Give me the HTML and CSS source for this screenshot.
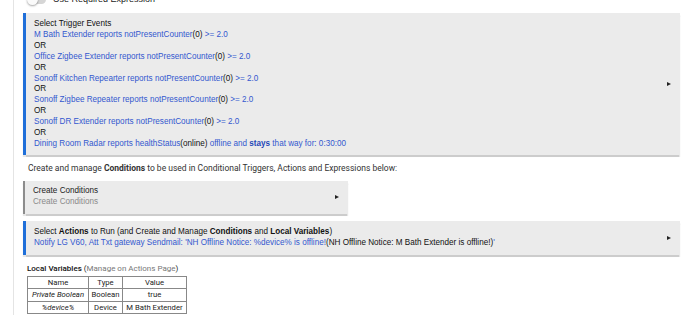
FILE: index.html
```html
<!DOCTYPE html>
<html lang="en">
<head>
    <meta charset="UTF-8">
    <meta name="viewport" content="width=device-width, initial-scale=1.0">
    <title>Rule Machine</title>
    <link rel="stylesheet" href="styles.css">
</head>
<body>
    <div class="panel">
        <div class="toggle-row">
            <span class="toggle"><span class="knob"></span></span>
            <span class="toggle-label">Use Required Expression</span>
        </div>

        <div class="rule-box first-box">
            <div class="box-text">
                <div class="box-title">Select Trigger Events</div>
                <div class="link">M Bath Extender reports notPresentCounter<span class="dark">(0)</span> &gt;= 2.0</div>
                <div class="dark">OR</div>
                <div class="link">Office Zigbee Extender reports notPresentCounter<span class="dark">(0)</span> &gt;= 2.0</div>
                <div class="dark">OR</div>
                <div class="link">Sonoff Kitchen Repearter reports notPresentCounter<span class="dark">(0)</span> &gt;= 2.0</div>
                <div class="dark">OR</div>
                <div class="link">Sonoff Zigbee Repeater reports notPresentCounter<span class="dark">(0)</span> &gt;= 2.0</div>
                <div class="dark">OR</div>
                <div class="link">Sonoff DR Extender reports notPresentCounter<span class="dark">(0)</span> &gt;= 2.0</div>
                <div class="dark">OR</div>
                <div class="link">Dining Room Radar reports healthStatus<span class="dark">(online)</span> offline and <b>stays</b> that way for: 0:30:00</div>
            </div>
            <span class="arrow"></span>
        </div>

        <p class="note">Create and manage <b>Conditions</b> to be used in Conditional Triggers, Actions and Expressions below:</p>

        <div class="rule-box small-box">
            <div class="box-text">
                <div class="box-title">Create Conditions</div>
                <div class="muted">Create Conditions</div>
            </div>
            <span class="arrow"></span>
        </div>

        <div class="rule-box actions-box">
            <div class="box-text">
                <div class="box-title">Select <b>Actions</b> to Run (and Create and Manage <b>Conditions</b> and <b>Local Variables</b>)</div>
                <div class="link">Notify LG V60, Att Txt gateway Sendmail: 'NH Offline Notice: %device% is offline!<span class="dark">(NH Offline Notice: M Bath Extender is offline!)</span>'</div>
            </div>
            <span class="arrow"></span>
        </div>

        <div class="vars">
            <div class="vars-title"><b>Local Variables</b> (<span class="muted">Manage on Actions Page</span>)</div>
            <table class="vars-table">
                <tr>
                    <th class="col-name">Name</th>
                    <th class="col-type">Type</th>
                    <th class="col-value">Value</th>
                </tr>
                <tr>
                    <td><i>Private Boolean</i></td>
                    <td>Boolean</td>
                    <td>true</td>
                </tr>
                <tr>
                    <td><i>%device%</i></td>
                    <td>Device</td>
                    <td>M Bath Extender</td>
                </tr>
            </table>
        </div>
    </div>
</body>
</html>
```

FILE: styles.css
```css
body {
    font-family: "Liberation Sans", Arial, sans-serif;
    color: #222;
    background-color: #fff;
    margin: 0;
}

.panel {
    margin-left: 13px;
    margin-right: 10px;
    padding-left: 9px;
    border-left: 1px solid #e4e4e4;
    height: 322px;
    box-sizing: border-box;
}

.toggle-row {
    display: flex;
    align-items: center;
    gap: 7px;
    height: 12px;
    margin-top: -7px;
    margin-left: 5px;
    font-size: 9px;
}

.toggle {
    width: 18px;
    height: 9px;
    border-radius: 5px;
    background: #d6d6d6;
    position: relative;
}

.toggle .knob {
    position: absolute;
    left: -1px;
    top: -1px;
    width: 11px;
    height: 11px;
    border-radius: 50%;
    background: #fafafa;
    box-shadow: 0 1px 2px rgba(0, 0, 0, 0.35);
}

.rule-box {
    display: flex;
    align-items: center;
    background: #ebebeb;
    border-left: 3px solid #1f6fd9;
    box-shadow: 0 1.5px 1px rgba(0, 0, 0, 0.2);
    margin-top: 8px;
    padding: 6px 9px 5px 8px;
    font-size: 8.15px;
    line-height: 10.9px;
}

.first-box {
    margin-top: 8px;
}

.box-text {
    flex: 1;
}

.box-title {
    color: #111;
}

.link {
    color: #3358cf;
}

.link b {
    color: #2448b8;
}

.dark {
    color: #111;
}

.muted {
    color: #8a8a8a;
}

.arrow {
    width: 0;
    height: 0;
    border-top: 2.5px solid transparent;
    border-bottom: 2.5px solid transparent;
    border-left: 4px solid #222;
}

.note {
    font-family: Roboto, "Liberation Sans", sans-serif;
    font-size: 8.5px;
    color: #333;
    margin: 8px 0 0 5px;
}

.small-box {
    width: 325px;
    box-sizing: border-box;
    border-left: 2px solid #8c8c8c;
    margin-top: 8px;
    padding-top: 5px;
    padding-bottom: 6px;
}

.small-box .box-title {
    color: #222;
}

.actions-box {
    margin-top: 7px;
    padding-top: 6px;
    padding-bottom: 6px;
}

.vars {
    margin: 9px 0 0 4px;
    font-family: Roboto, "Liberation Sans", sans-serif;
    font-size: 8px;
}

.vars-title b {
    font-weight: 500;
    color: #111;
}

.vars-title .muted {
    color: #777;
}

.vars-table {
    border-collapse: collapse;
    border: 1px solid #222;
    margin-top: 3px;
    font-size: 7.7px;
}

.vars-table th,
.vars-table td {
    border: 1px solid #888;
    text-align: center;
    white-space: nowrap;
    padding: 0 1px;
    height: 11.5px;
    font-weight: normal;
    color: #222;
}

.col-name {
    width: 58px;
}

.col-type {
    width: 31px;
}

.col-value {
    width: 61px;
}
```
